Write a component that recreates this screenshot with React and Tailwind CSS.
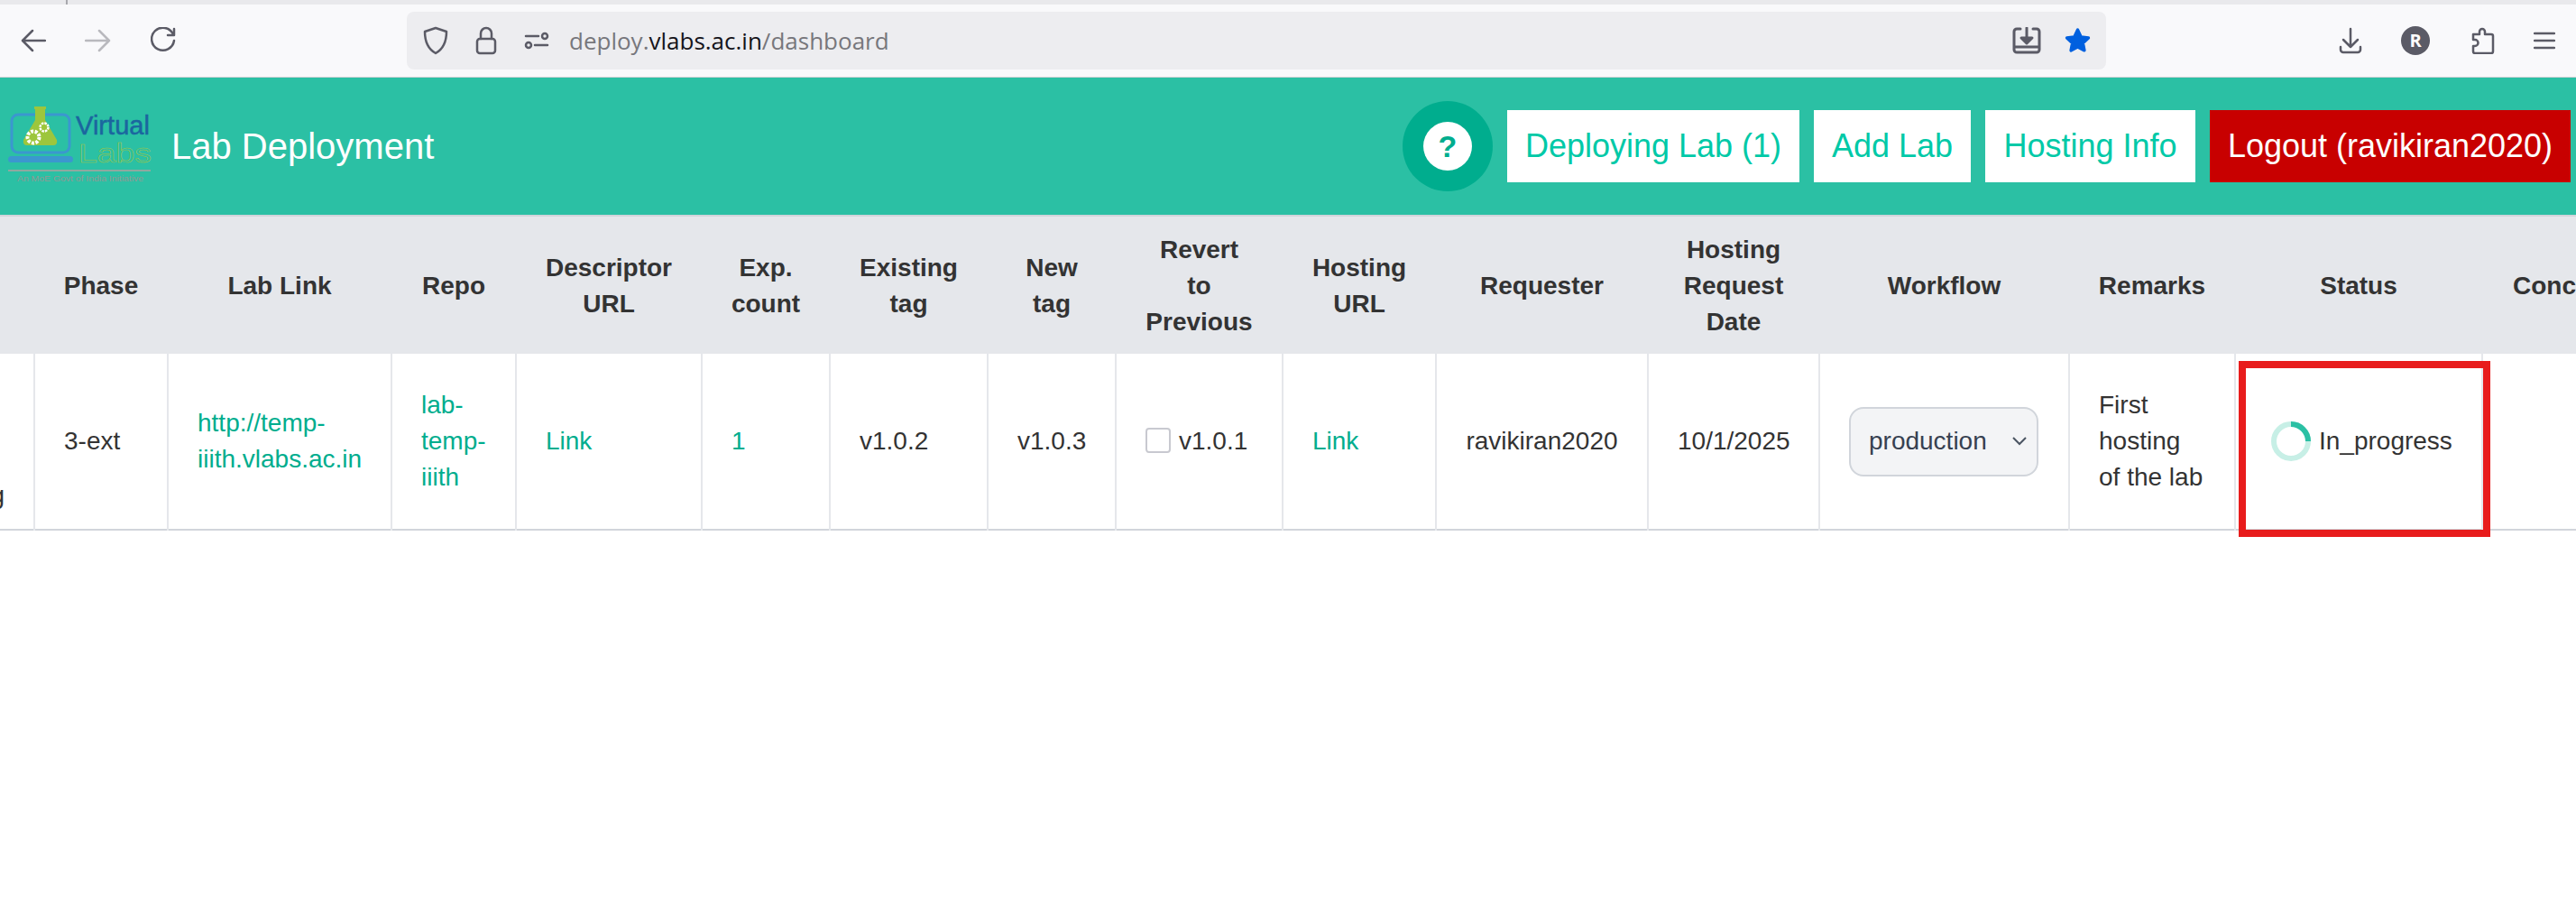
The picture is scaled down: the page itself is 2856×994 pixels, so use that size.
import React from 'react';

const headers = ['Phase', 'Lab Link', 'Repo', 'Descriptor URL', 'Exp. count', 'Existing tag', 'New tag', 'Revert to Previous', 'Hosting URL', 'Requester', 'Hosting Request Date', 'Workflow', 'Remarks', 'Status', 'Concurrent'];

const ic = { fill: 'none', stroke: '#5b5b66', strokeWidth: 2.5, strokeLinecap: 'round', strokeLinejoin: 'round' };

const Toolbar = () => (
  <div className="flex h-[81px] items-center border-b border-[#d4d4d8] bg-[#f9f9fb]">
    <svg width="28" height="26" viewBox="0 0 28 26" className="ml-[23px]" {...ic}><path d="M27 13H3M13 2 2 13l11 11" /></svg>
    <svg width="30" height="26" viewBox="0 0 30 26" className="ml-[43px]" {...ic} stroke="#b9b9be"><path d="M1 13h26M16 2l11 11-11 11" /></svg>
    <svg width="28" height="30" viewBox="0 0 28 30" className="ml-[43px]" {...ic}><path d="M25 8A12.5 12.5 0 1 0 26 15" /><path d="M26 2v7h-7" /></svg>
    <div className="ml-[256px] flex h-[64px] w-[1884px] items-center rounded-lg bg-[#ededf0] pl-[18px] pr-[15px]">
      <svg width="28" height="32" viewBox="0 0 28 32" {...ic}><path d="M14 2 26 6c0 11-3 19-12 24C5 25 2 17 2 6z" /></svg>
      <svg width="24" height="32" viewBox="0 0 24 32" className="ml-[30px]" {...ic}><rect x="2" y="14" width="20" height="16" rx="3" /><path d="M6 14V8a6 6 0 0 1 12 0v6" /></svg>
      <svg width="28" height="20" viewBox="0 0 28 20" className="ml-[30px]" {...ic}><path d="M2 5h14M12 15h14" /><circle cx="23" cy="5" r="3" /><circle cx="5" cy="15" r="3" /></svg>
      <span className="ml-[22px] whitespace-nowrap font-['Open_Sans',sans-serif] text-[26px] text-[#77777c]">
        deploy.<span className="text-[#15141a]">vlabs.ac.in</span>/dashboard
      </span>
      <svg width="32" height="30" viewBox="0 0 32 30" className="ml-auto" {...ic} strokeWidth="3"><path d="M9 2H5a3 3 0 0 0-3 3v20a3 3 0 0 0 3 3h22a3 3 0 0 0 3-3V5a3 3 0 0 0-3-3h-4M2 22h28" /><path d="M16 1v12" /><path d="M10 12h12l-6 6z" fill="#5b5b66" /></svg>
      <svg width="33" height="32" viewBox="0 0 24 24" className="ml-[24px]"><path fill="#0060df" stroke="#0060df" strokeWidth="2.5" strokeLinejoin="round" d="M12 3l2.8 5.9 6.2.8-4.6 4.3 1.2 6.2L12 17.2l-5.6 3 1.2-6.2L3 9.7l6.2-.8z" /></svg>
    </div>
    <svg width="26" height="30" viewBox="0 0 26 30" className="ml-[258px]" {...ic}><path d="M13 2v19M5 14l8 8 8-8M2 22v3a3 3 0 0 0 3 3h16a3 3 0 0 0 3-3v-3" /></svg>
    <div className="ml-[43px] flex h-[32px] w-[32px] items-center justify-center rounded-full bg-[#5b5b66] font-['Open_Sans',sans-serif] text-[20px] font-bold text-white">R</div>
    <svg width="28" height="30" viewBox="0 0 28 30" className="ml-[44px]" {...ic}><path d="M4 8h7V5a3 3 0 0 1 6 0v3h7a2 2 0 0 1 2 2v17a2 2 0 0 1-2 2H6a2 2 0 0 1-2-2v-6h2a3.5 3.5 0 0 0 0-7H4z" /></svg>
    <svg width="24" height="22" viewBox="0 0 24 22" className="ml-[43px]" {...ic}><path d="M1 3h22M1 11h22M1 19h22" /></svg>
  </div>
);

const Logo = () => (
  <svg width="170" height="90" viewBox="0 0 170 90" className="shrink-0">
    <rect x="13" y="10" width="64" height="42" rx="7" fill="none" stroke="#3b97cf" strokeWidth="3" />
    <rect x="9" y="56" width="72" height="7" rx="3.5" fill="#3b97cf" />
    <path d="M38 1h13v3h-1v12l13 22q1 6-4 6H30q-5 0-4-6l13-22V4h-1z" fill="#9dc63c" />
    <circle cx="37" cy="35" r="6.5" fill="none" stroke="#fff" strokeWidth="4" strokeDasharray="3 1.5" />
    <circle cx="49" cy="24" r="4.5" fill="none" stroke="#fff" strokeWidth="2.5" strokeDasharray="2.5 1" />
    <text x="84" y="32" fontFamily="'Liberation Sans', sans-serif" fontSize="30" textLength="82" lengthAdjust="spacingAndGlyphs" fill="#1b669f" stroke="#1b669f" strokeWidth="0.5">Virtual</text>
    <text x="87" y="63" fontFamily="'Liberation Sans', sans-serif" fontSize="30" textLength="81" lengthAdjust="spacingAndGlyphs" fill="#2bc0a4" stroke="#a3c53e" strokeWidth="0.5">Labs</text>
    <rect x="9" y="71" width="158" height="2" fill="#8fa8a0" />
    <text x="19" y="84" fontFamily="'Liberation Sans', sans-serif" fontSize="9" textLength="140" lengthAdjust="spacingAndGlyphs" fill="#8f9a94">An MoE Govt of India Initiative</text>
  </svg>
);

const NavButton = ({ children, className }) => (
  <button className={`flex h-[80px] items-center justify-center whitespace-nowrap text-[36px] ${className}`}>{children}</button>
);

const Navbar = () => (
  <div className="flex h-[152px] items-center gap-[16px] bg-[#2bc0a4] pr-[6px] font-['Liberation_Sans',sans-serif]">
    <div className="mr-auto flex items-center gap-[20px]">
      <Logo />
      <span className="text-[40px] text-white">Lab Deployment</span>
    </div>
    <div className="flex h-[100px] w-[100px] items-center justify-center rounded-full bg-[#00ad8e]">
      <div className="flex h-[54px] w-[54px] items-center justify-center rounded-full bg-white text-[34px] font-bold text-[#00ad8e]">?</div>
    </div>
    <NavButton className="w-[324px] bg-white text-[#00c9a7]">Deploying Lab (1)</NavButton>
    <NavButton className="w-[174px] bg-white text-[#00c9a7]">Add Lab</NavButton>
    <NavButton className="w-[233px] bg-white text-[#00c9a7]">Hosting Info</NavButton>
    <NavButton className="w-[400px] bg-[#c80000] text-white">Logout (ravikiran2020)</NavButton>
  </div>
);

const td = 'border-x-2 border-[#e5e7eb] px-8 text-[#333]';
const link = 'text-[#00ad8e]';

const DeployTable = () => (
  <div className="overflow-hidden pb-[10px]">
    <table className="ml-[-163px] w-[3133px] table-fixed border-collapse font-['Liberation_Sans',sans-serif] text-[28px] leading-[40px]">
      <colgroup>
        <col className="w-[200px]" />
        <col className="w-[148px]" />
        <col className="w-[248px]" />
        <col className="w-[138px]" />
        <col className="w-[206px]" />
        <col className="w-[142px]" />
        <col className="w-[175px]" />
        <col className="w-[142px]" />
        <col className="w-[185px]" />
        <col className="w-[170px]" />
        <col className="w-[235px]" />
        <col className="w-[190px]" />
        <col className="w-[277px]" />
        <col className="w-[184px]" />
        <col className="w-[274px]" />
        <col className="w-[219px]" />
      </colgroup>
      <thead>
        <tr className="h-[153px] border-t-2 border-[#d1d5db] bg-[#e5e7eb]">
          <th className="px-8"></th>
          {headers.map(h => (
            <th key={h} className="px-8 pt-[2px] text-center font-bold text-[#333]">{h}</th>
          ))}
        </tr>
      </thead>
      <tbody>
        <tr className="h-[195px] border-b-2 border-[#d1d5db]">
          <td className={`${td} text-right`}><br /><br /><br />Hosting</td>
          <td className={td}>3-ext</td>
          <td className={td}><span className={link}>http://temp-iiith.vlabs.ac.in</span></td>
          <td className={td}><span className={link}>lab-temp-iiith</span></td>
          <td className={td}><span className={link}>Link</span></td>
          <td className={td}><span className={link}>1</span></td>
          <td className={td}>v1.0.2</td>
          <td className={`${td} text-center`}>v1.0.3</td>
          <td className={td}>
            <div className="flex items-center gap-[9px] whitespace-nowrap">
              <span className="mb-[3px] h-[28px] w-[28px] shrink-0 rounded-[4px] border-2 border-[#c8c9d0] bg-white"></span>
              v1.0.1
            </div>
          </td>
          <td className={td}><span className={link}>Link</span></td>
          <td className={`${td} text-center`}>ravikiran2020</td>
          <td className={`${td} text-center`}>10/1/2025</td>
          <td className={td}>
            <div className="flex h-[77px] w-[210px] items-center justify-between rounded-2xl border-2 border-[#d1d5db] bg-[#f3f4f6] pl-[20px] pr-[11px] text-[#374151]">
              production
              <svg width="16" height="10" viewBox="0 0 16 10" fill="none" stroke="#4b5563" strokeWidth="2"><path d="M1 1l7 7 7-7" /></svg>
            </div>
          </td>
          <td className={td}>First hosting of the lab</td>
          <td className={`${td} relative`}>
            <div className="ml-[7px] flex items-center gap-[9px]">
              <svg width="44" height="44" viewBox="0 0 44 44" fill="none" className="shrink-0">
                <circle cx="22" cy="22" r="19" stroke="#c7efe6" strokeWidth="6" />
                <path d="M22 3a19 19 0 0 1 19 19" stroke="#2bc0a4" strokeWidth="6" />
              </svg>
              In_progress
            </div>
            <div className="absolute left-[3px] top-[8px] h-[195px] w-[279px] border-8 border-[#e81c1c]"></div>
          </td>
          <td className={td}></td>
        </tr>
      </tbody>
    </table>
  </div>
);

export default function App() {
  return (
    <div className="min-h-[994px] bg-white">
      <div className="flex h-[5px] bg-[#e9e9ec]">
        <div className="ml-[73px] w-[2px] bg-[#a8a8ad]"></div>
      </div>
      <Toolbar />
      <Navbar />
      <DeployTable />
    </div>
  );
}
